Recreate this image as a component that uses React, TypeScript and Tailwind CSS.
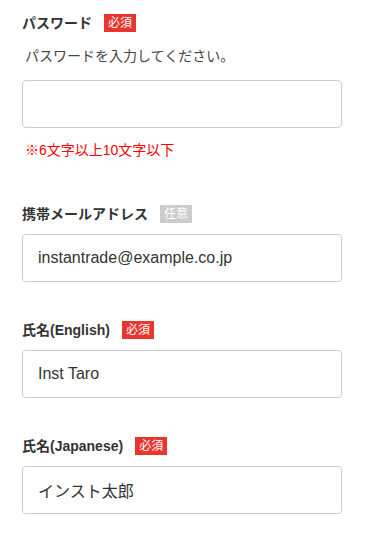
import React from "react";

const font = { fontFamily: '"Liberation Sans", "Noto Sans CJK JP", sans-serif' };

function Badge({ required }: { required: boolean }) {
  return required ? (
    <span className="inline-flex h-[18px] items-center bg-[#e8352e] px-[4px] text-[12px] leading-none text-white">必須</span>
  ) : (
    <span className="inline-flex h-[18px] items-center bg-[#cccccc] px-[4px] text-[12px] leading-none text-white">任意</span>
  );
}

function Label({ text, required }: { text: string; required: boolean }) {
  return (
    <div className="flex h-[18px] items-center gap-[12px]">
      <span className="text-[14px] font-bold leading-none text-[#333333]">{text}</span>
      <Badge required={required} />
    </div>
  );
}

function Field({ value }: { value: string }) {
  return (
    <input
      readOnly
      defaultValue={value}
      className="block h-[48px] w-[320px] rounded-[4px] border border-[#cccccc] bg-white pl-[15px] text-[16px] text-[#333333] outline-none"
      style={font}
    />
  );
}

export default function App() {
  return (
    <div className="min-h-[539px] w-[367px] bg-white pl-[22px] pt-[14px]" style={font}>
      <Label text="パスワード" required />
      <p className="mt-[12px] pl-[3px] text-[14px] leading-[24px] text-[#444444]">パスワードを入力してください。</p>
      <div className="mt-[12px]">
        <Field value="" />
      </div>
      <p className="mt-[12px] pl-[3px] text-[14px] leading-[20px] text-[#ff0000]">※6文字以上10文字以下</p>

      <div className="mt-[45px]">
        <Label text="携帯メールアドレス" required={false} />
      </div>
      <div className="mt-[11px]">
        <Field value="instantrade@example.co.jp" />
      </div>

      <div className="mt-[39px]">
        <Label text="氏名(English)" required />
      </div>
      <div className="mt-[11px]">
        <Field value="Inst Taro" />
      </div>

      <div className="mt-[39px]">
        <Label text="氏名(Japanese)" required />
      </div>
      <div className="mt-[11px]">
        <Field value="インスト太郎" />
      </div>
    </div>
  );
}
